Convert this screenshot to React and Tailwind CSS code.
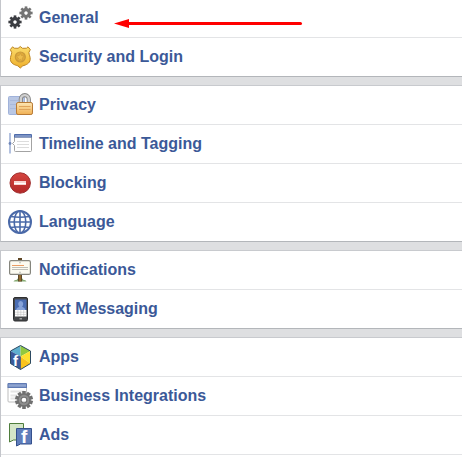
import React from "react";

const Gear = ({ x, y, r, hole, fill, teeth = 8 }) => (
  <g transform={`translate(${x} ${y})`} fill={fill}>
    {Array.from({ length: teeth }, (_, i) => (
      <rect
        key={i}
        x={-r * 0.2}
        y={-r}
        width={r * 0.4}
        height={r * 0.5}
        transform={`rotate(${(360 / teeth) * i})`}
      />
    ))}
    <circle r={(r * 0.75 + hole) / 2} fill="none" stroke={fill} strokeWidth={r * 0.75 - hole} />
  </g>
);

const Icon = ({ children }) => (
  <svg
    width="24"
    height="24"
    viewBox="0 0 24 24"
    fill="none"
    aria-hidden="true"
    className="shrink-0 overflow-visible"
  >
    {children}
  </svg>
);

const GeneralIcon = () => (
  <Icon>
    <Gear x={18} y={7} r={6.6} hole={1.7} fill="#747474" />
    <Gear x={7} y={16} r={6.6} hole={1.7} fill="#3b3d42" />
  </Icon>
);

const SecurityIcon = () => (
  <Icon>
    <defs>
      <linearGradient id="badge" x1="0" y1="0" x2="0" y2="1">
        <stop offset="0" stopColor="#fbdc6c" />
        <stop offset="1" stopColor="#efb02c" />
      </linearGradient>
    </defs>
    <path
      d="M12.3 1.5 14.5 3.3 18.5 3.2 20 1.8 22.3 4.6 20.9 7.5C21 10 22.4 11.5 22.2 14.5 21.8 18.5 18 20 14.8 20.8L12.3 23 9.8 20.8C6.6 20 2.8 18.5 2.4 14.5 2.2 11.5 3.6 10 3.7 7.5L2.3 4.6 4.6 1.8 6.1 3.2 10.1 3.3Z"
      fill="url(#badge)"
      stroke="#bd8523"
    />
    <circle cx="12.3" cy="12" r="5" fill="#dfaa3a" stroke="#c9993a" strokeWidth="1.2" />
    <path
      d="m12.3 8.2 1.2 2.5 2.7.4-2 1.9.5 2.7-2.4-1.3-2.4 1.3.5-2.7-2-1.9 2.7-.4Z"
      fill="#edbd4c"
      stroke="#c4933a"
      strokeWidth=".5"
    />
  </Icon>
);

const PrivacyIcon = () => (
  <Icon>
    <defs>
      <linearGradient id="lock" x1="0" y1="0" x2="0" y2="1">
        <stop offset="0" stopColor="#fde6b4" />
        <stop offset="1" stopColor="#f0b053" />
      </linearGradient>
    </defs>
    <rect x=".5" y="3.5" width="16" height="18" rx="1" fill="#b9c7e4" stroke="#a0b2da" />
    <path d="M2 7.5h8M2 11.5h6M2 15.5h6" stroke="#a9b9dc" />
    <path d="M12.8 10V6.3a4 4.2 0 0 1 8 0V10" stroke="#858585" strokeWidth="4.2" />
    <path d="M12.8 10V6.3a4 4.2 0 0 1 8 0V10" stroke="#d0d0d0" strokeWidth="2.4" />
    <rect x="8.5" y="9.5" width="16" height="12" rx="1.6" fill="url(#lock)" stroke="#b87a35" />
    <path d="M11 13.5h11.5M11 16.5h11.5" stroke="#dfa45c" />
  </Icon>
);

const TimelineIcon = () => (
  <Icon>
    <path d="M2 1v20.5" stroke="#b3c1df" strokeWidth="2" />
    <circle cx="2" cy="11.5" r="1.4" fill="#6f86b8" />
    <path
      d="M7.5 19.5q-1 0-1-1v-5l-2-2 2-2V5h17v13.5q0 1-1 1Z"
      fill="#fff"
      stroke="#a3a3a3"
    />
    <path d="M6 5.5V3q0-1 1-1h16q1 0 1 1v2.5Z" fill="#4f6cab" />
    <path d="M7 4h16" stroke="#8ba0cd" strokeWidth="1.5" />
    <path d="M9 9.500h12M9 12.500h12M9 15.500h12" stroke="#dcdcdc" />
  </Icon>
);

const BlockingIcon = () => (
  <Icon>
    <defs>
      <linearGradient id="stop" x1="0" y1="0" x2="0" y2="1">
        <stop offset="0" stopColor="#d4453f" />
        <stop offset="1" stopColor="#b32828" />
      </linearGradient>
    </defs>
    <circle cx="12.2" cy="12" r="10.2" fill="url(#stop)" stroke="#9f2f2f" />
    <rect x="6" y="10" width="12" height="4" fill="#f8d5d2" />
    <path d="M6 12.5h12" stroke="#fff" />
  </Icon>
);

const LanguageIcon = () => (
  <Icon>
    <g stroke="#4a69a8" strokeWidth="1.6">
      <circle cx="12" cy="12" r="11" strokeWidth="2" />
      <ellipse cx="12" cy="12" rx="5.8" ry="11" />
      <path d="M12 1v22M1 12h22M2.5 6.5Q12 8 21.5 6.5M2.5 17.5Q12 16 21.5 17.5" />
    </g>
  </Icon>
);

const NotificationsIcon = () => (
  <Icon>
    <path d="M5.5 23.5q.5-2 3-1.5 1-2 3.500-1.200 3-.8 3.500 1.200 2.500-.5 3 1.500Z" fill="#86ab74" />
    <path d="M12 0v23.5" stroke="#5e4726" strokeWidth="4" />
    <path d="M12 17v6" stroke="#a1742f" strokeWidth="1.5" />
    <rect x="1.6" y="2.6" width="20.8" height="13.8" rx="1.5" fill="#fcfbf1" stroke="#85857d" strokeWidth="1.200" />
    <circle cx="12" cy="4.5" r="1" fill="#c6c6bd" />
    <circle cx="12" cy="14.5" r="1" fill="#c6c6bd" />
    <path d="M4 7.5h12" stroke="#ea9d64" />
    <path d="M4 9.500h16M4 11.500h16" stroke="#bfbfb8" />
  </Icon>
);

const PhoneIcon = () => (
  <Icon>
    <rect x="5.5" y=".5" width="14" height="23.5" rx="1.5" fill="#46484b" stroke="#2e2f31" />
    <rect x="7" y="2.5" width="11.5" height="10.5" fill="#4a6db3" />
    <path
      d="M8 13q.3-2.500 3.300-3.200-1.200-1.300-1.100-3.300.2-2.500 2.500-2.500t2.500 2.500q.1 2-1.100 3.300 3 .7 3.300 3.200Z"
      fill="#86a3da"
    />
    <rect x="7" y="13" width="11.5" height="6.5" fill="#fff" />
    <path d="M7 15.200h11.500M7 17.400h11.500M9.900 13v6.500M12.800 13v6.500M15.700 13v6.500" stroke="#b5b5b5" strokeWidth=".5" />
    <rect x="11.5" y="21" width="2.5" height="1.5" fill="#a0a0a0" />
  </Icon>
);

const AppsIcon = () => (
  <Icon>
    <path d="M12.500 .5 2.500 6l10 5.500Z" fill="#5fb0cf" />
    <path d="M12.500 .5 22.500 6l-10 5.500Z" fill="#92c83e" />
    <path d="M2.500 6v12.500l10 6V11.500Z" fill="#3a5a9b" />
    <path d="M22.500 6v12.500l-10-7Z" fill="#ffe02e" />
    <path d="M12.500 11.500v13l10-6Z" fill="#fbc31a" />
    <path d="m12.500.5 10 5.500v12.500l-10 6-10-6V6Z" stroke="#2c4a63" />
    <path d="M12.500 11.500v13" stroke="#2b4272" strokeWidth=".7" />
    <text
      x="5"
      y="21"
      fontFamily="Liberation Sans, sans-serif"
      fontSize="15"
      fontWeight="700"
      fill="#fff"
    >
      f
    </text>
  </Icon>
);

const BusinessIcon = () => (
  <Icon>
    <rect x="0" y="-.5" width="18.5" height="18.5" rx="1" fill="#fff" stroke="#bdbdbd" />
    <path d="M-.5 4V0q0-1 1-1H18q1 0 1 1v4Z" fill="#5f7ab3" />
    <path d="M.5 1.500H18" stroke="#8fa5d0" strokeWidth="2.500" />
    <path d="M2.500 7.500H16M2.500 11.500H9M2.500 14.500H8" stroke="#e4e4e4" strokeWidth="2" />
    <Gear x={16} y={16} r={9} hole={2.3} fill="#707070" teeth={10} />
    <circle cx="16" cy="16" r="4.300" stroke="#8e8e8e" strokeWidth="2" />
  </Icon>
);

const AdsIcon = () => (
  <Icon>
    <path d="M1.500 .5h14v16.500H5.500l-4 2Z" fill="#d5e6c8" stroke="#4f7d3c" />
    <path d="M8.500 5.500h15v15.500H12.500l-4 2Z" fill="#5f7dbb" stroke="#35508c" />
    <text
      x="13"
      y="20"
      fontFamily="Liberation Sans, sans-serif"
      fontSize="19"
      fontWeight="700"
      fill="#fff"
    >
      f
    </text>
  </Icon>
);

const Arrow = () => (
  <svg
    width="190"
    height="10"
    viewBox="0 0 190 10"
    aria-hidden="true"
    className="absolute left-28 top-5"
  >
    <path d="M15 4.500H187.500" stroke="#f00" strokeWidth="3" strokeLinecap="round" />
    <path d="M1 4.500 16 0v9Z" fill="#f00" />
  </svg>
);

const groups = [
  [
    { label: 'General', icon: GeneralIcon, marked: true },
    { label: 'Security and Login', icon: SecurityIcon }
  ],
  [
    { label: 'Privacy', icon: PrivacyIcon },
    { label: 'Timeline and Tagging', icon: TimelineIcon },
    { label: 'Blocking', icon: BlockingIcon },
    { label: 'Language', icon: LanguageIcon }
  ],
  [
    { label: 'Notifications', icon: NotificationsIcon },
    { label: 'Text Messaging', icon: PhoneIcon }
  ],
  [
    { label: 'Apps', icon: AppsIcon },
    { label: 'Business Integrations', icon: BusinessIcon },
    { label: 'Ads', icon: AdsIcon }
  ]
];

const App = () => {
  return (
    <nav
      aria-label="Settings"
      className="-mt-0.5 flex min-h-screen flex-col gap-2 bg-[#dedfe1] font-['Liberation_Sans',Arial,sans-serif]"
    >
      {groups.map((items) => (
        <ul
          key={items[0].label}
          className="divide-y divide-[#e3e4e6] border-y border-l border-t-[#c8cace] border-b-[#b3b6ba] border-l-[#c4c6cb] bg-white last:grow last:border-b-0"
        >
          {items.map(({ label, icon: ItemIcon, marked }) => (
            <li key={label} className="relative">
              <a
                href="#"
                className="flex items-center gap-[7px] p-[7px] text-base leading-6 font-bold text-[#3b5998]"
              >
                <ItemIcon />
                <span>{label}</span>
              </a>
              {marked && <Arrow />}
            </li>
          ))}
          {/* closing line under the final group */}
          {items === groups[groups.length - 1] && <li aria-hidden="true" className="h-1" />}
        </ul>
      ))}
    </nav>
  );
};

export default App;
